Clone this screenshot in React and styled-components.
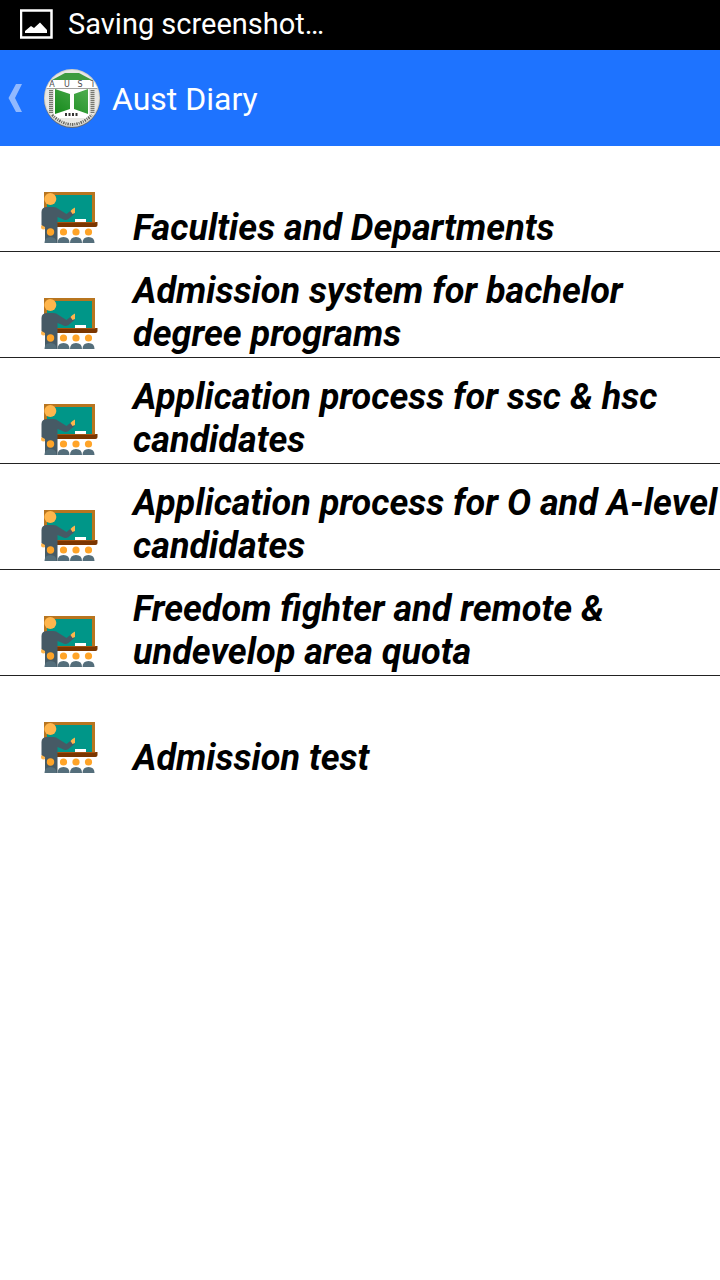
import React from "react";
import styled, { createGlobalStyle } from "styled-components";

const GlobalStyle = createGlobalStyle`
  * { box-sizing: border-box; }
  body {
    margin: 0;
    background: #fff;
    color: #000;
    font-family: Roboto, "Noto Sans", sans-serif;
  }
`;

const Screen = styled.div`
  min-height: 100vh;
  overflow-x: hidden;
`;

const StatusBar = styled.div`
  display: flex;
  align-items: center;
  gap: 15px;
  height: 50px;
  padding: 0 0 2px 20px;
  background: #000;
  color: #fff;
  font-size: 29px;
  line-height: 48px;
`;

const ActionBar = styled.header`
  display: flex;
  align-items: center;
  gap: 11px;
  height: 96px;
  background: #1e73ff;
  color: #fff;
`;

const UpButton = styled.button`
  display: flex;
  align-items: center;
  gap: 20px;
  padding: 0 0 0 8px;
  border: 0;
  background: none;
`;

const Title = styled.h1`
  margin: 0;
  padding-top: 2px;
  font-size: 32px;
  font-weight: 400;
  line-height: 40px;
`;

const List = styled.ul`
  margin: 0;
  padding: 0;
  list-style: none;
`;

const Item = styled.li`
  border-bottom: 1px solid #222;
  &:last-child { border-bottom: 0; }
`;

const ItemLink = styled.a`
  display: flex;
  align-items: flex-end;
  gap: 34px;
  min-height: 105px;
  padding: 18px 0 1px 40px;
  overflow: hidden;
  color: inherit;
  text-decoration: none;
`;

const Label = styled.span`
  flex: none;
  font-size: 36px;
  font-style: italic;
  font-weight: 700;
  line-height: 43px;
  white-space: pre;
`;

const Drawing = styled.svg`
  display: block;
  flex: none;
`;

const ItemDrawing = styled(Drawing)`
  margin-bottom: 6px;
`;

function PictureIcon() {
  return (
    <Drawing width="33" height="30" viewBox="0 0 33 30" aria-hidden="true">
      <rect x="1" y="1.500" width="30.500" height="27" fill="none" stroke="#fff" strokeWidth="2.500" />
      <path d="M5 24v-2l6-5 3 2 6-5.500 7 7.500v3z" fill="#fff" />
    </Drawing>
  );
}

function UpChevron() {
  return (
    <Drawing width="15" height="28" viewBox="0 0 15 28" aria-hidden="true">
      <path d="M8 0h6L7 14l7 14H8L0.500 14z" fill="#91b9ff" />
    </Drawing>
  );
}

function Crest() {
  return (
    <Drawing width="58" height="62" viewBox="0 0 58 62" aria-hidden="true">
      <defs>
        <clipPath id="crest-clip"><ellipse cx="29" cy="31" rx="27" ry="28" /></clipPath>
        <linearGradient id="crest-green" x1="0" y1="1" x2="1" y2="0">
          <stop offset="0" stopColor="#168a1c" />
          <stop offset="1" stopColor="#4fad50" />
        </linearGradient>
      </defs>
      <ellipse cx="29" cy="32" rx="28" ry="29" fill="#646b75" />
      <ellipse cx="29" cy="31" rx="28" ry="29" fill="#cfcfca" />
      <g clipPath="url(#crest-clip)">
        <rect width="58" height="62" fill="#e9e8e4" />
        <path d="M9 13L22 6h14l13 7z" fill="#3d9b40" />
        <rect y="13" width="58" height="8" fill="#fff" />
        <rect x="11" y="21" width="35" height="30" fill="#fff" />
        <path d="M0 21.500h58" stroke="#a1a19e" />
        <g fill="#4c4c4c" fontFamily="DejaVu Sans" fontSize="8" textAnchor="middle">
          <text x="9" y="20">A</text>
          <text x="24" y="20">U</text>
          <text x="37" y="20">S</text>
          <text x="50" y="20">T</text>
        </g>
        <path d="M12 22l15 5v15l-15 5zM45 22l-14 5v15l14 5z" fill="url(#crest-green)" />
        <path d="M8 23v23M49.500 23v23" stroke="#77776f" strokeWidth="4" strokeDasharray="1.200 0.800" />
        <path d="M9 48Q29 67 49 48" fill="none" stroke="#66665f" strokeWidth="3" strokeDasharray="1.500 1 1 1" />
        <path d="M22 47.500h13" stroke="#333" strokeWidth="3" strokeDasharray="2 1.500" />
      </g>
    </Drawing>
  );
}

const AUDIENCE = [23.5, 36, 48.5];

function ClassroomIcon() {
  return (
    <ItemDrawing width="59" height="55" viewBox="0 0 59 55" aria-hidden="true">
      <rect x="4" y="3" width="51" height="31" fill="#b8751f" />
      <rect x="7" y="6" width="45" height="27" fill="#009688" />
      <rect x="35" y="30" width="11" height="3" fill="#fff" />
      <path d="M16 33h41.500v3q0 2-2 2H16z" fill="#7b3600" />
      <path d="M17 33h38.500v1H17z" fill="#a45312" />
      <circle cx="3.500" cy="38" r="2.500" fill="#ffb64d" />
      <path d="M1.500 23q0-5 6-5h6q3 0 5 2l8 5 5-4 3 4-6 5q-3 2-6 0l-5-2v26H5V38l-3.500-2z" fill="#465a65" />
      <circle cx="10.300" cy="10" r="6" fill="#ffb64d" />
      <path d="M30.500 22l2-2 2.500-1.500v5.500l-2.500 1z" fill="#ffb64d" />
      <circle cx="10.500" cy="43" r="3.700" fill="#ffa428" />
      <path d="M4.500 54q0-6 6-6t6 6z" fill="#546e7b" />
      {AUDIENCE.map((x) => (
        <g key={x} transform={`translate(${x} 0)`}>
          <circle cy="43" r="3.600" fill="#ffa428" />
          <path d="M-6 54q0-6 6-6t6 6z" fill="#546e7b" />
        </g>
      ))}
    </ItemDrawing>
  );
}

const TOPICS = [
  "Faculties and Departments",
  "Admission system for bachelor\ndegree programs",
  "Application process for ssc & hsc\ncandidates",
  "Application process for O and A-level\ncandidates",
  "Freedom fighter and remote &\nundevelop area quota",
  "Admission test",
];

export default function App() {
  return (
    <Screen>
      <GlobalStyle />
      <StatusBar role="status">
        <PictureIcon />
        <span>Saving screenshot…</span>
      </StatusBar>
      <ActionBar>
        <UpButton type="button" aria-label="Navigate up">
          <UpChevron />
          <Crest />
        </UpButton>
        <Title>Aust Diary</Title>
      </ActionBar>
      <main>
        <List>
          {TOPICS.map((topic) => (
            <Item key={topic}>
              <ItemLink href="#">
                <ClassroomIcon />
                <Label>{topic}</Label>
              </ItemLink>
            </Item>
          ))}
        </List>
      </main>
    </Screen>
  );
}
